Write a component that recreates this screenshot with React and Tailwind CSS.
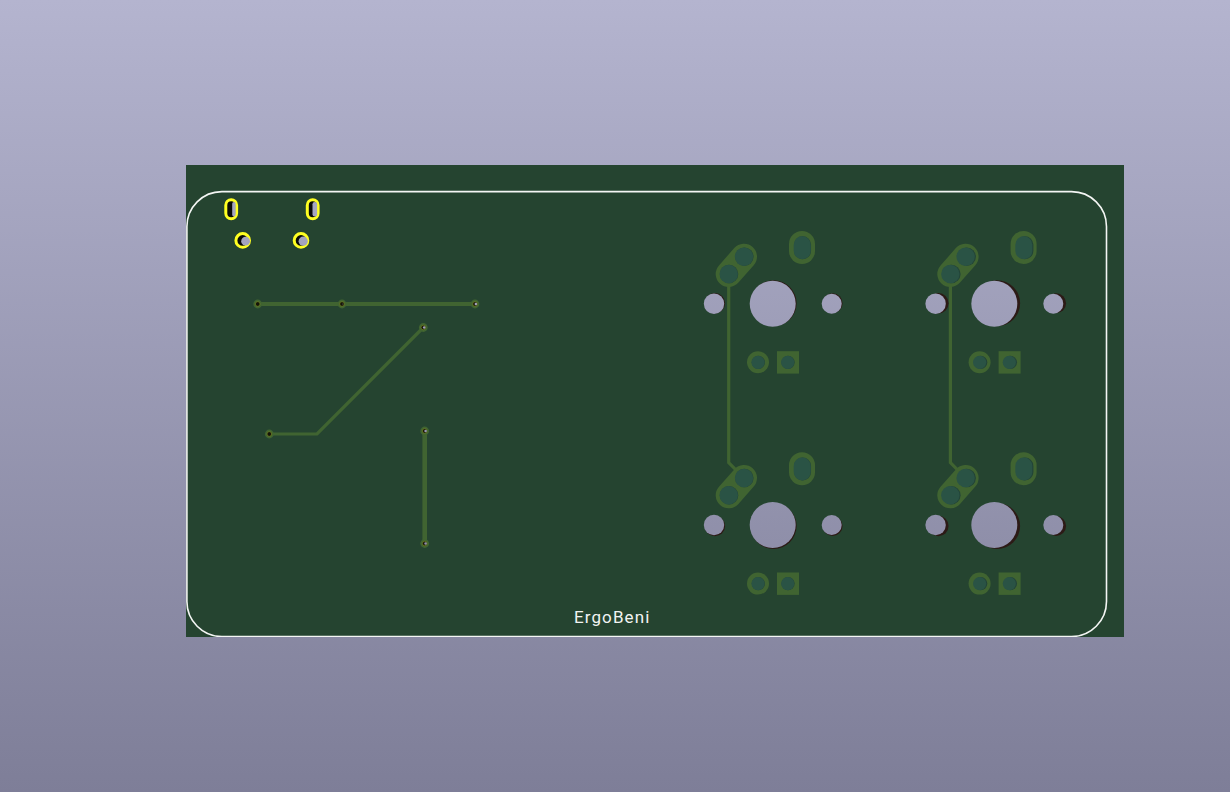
const SKY_TOP = '#b4b4cf';
const SKY_BOTTOM = '#7e7e98';
const PAD = '#406431';
const DRILL = '#2a5345';
const WALL = '#2c1a16';

// switch footprints, page coordinates of the centre hole
const switches = [
  { x: 772.7, y: 303.7, dx: 0.9, dy: -0.5 },
  { x: 772.7, y: 525, dx: 0.9, dy: 1 },
  { x: 994.3, y: 303.7, dx: 2.8, dy: -0.5 },
  { x: 994.3, y: 525, dx: 2.8, dy: 1 },
];

const vias = [
  { x: 257.7, y: 304, light: 0 },
  { x: 342, y: 304, light: 0.3 },
  { x: 475, y: 304, light: 0.9 },
  { x: 423.3, y: 327.5, light: 0.9 },
  { x: 269.3, y: 434, light: 0 },
  { x: 424.7, y: 431, light: 0.9 },
  { x: 424.7, y: 543.5, light: 0.9 },
];

const traces = [
  { d: 'M257.7 304H475', w: 4 },
  { d: 'M269.3 434H317L423.3 327.5', w: 3.2 },
  { d: 'M424.7 431V543.5', w: 4.6 },
  { d: 'M728.7 274V462.5L736 470', w: 3.2 },
  { d: 'M950.4 274V462.5L957.7 470', w: 3.2 },
];

const Hole = ({ x, y, r, dx, dy }) => (
  <g>
    <circle cx={x + dx} cy={y + dy} r={r} fill={WALL} />
    <circle cx={x} cy={y} r={r} fill="url(#sky)" />
  </g>
);

const Drill = ({ x, y, r, dx }) => (
  <g>
    <circle cx={x + dx * 0.4} cy={y} r={r} fill="#234438" />
    <circle cx={x} cy={y} r={r} fill={DRILL} />
  </g>
);

const SwitchFootprint = ({ x, y, dx, dy }) => (
  <g>
    {/* angled pad */}
    <line x1={x - 44} y1={y - 29.7} x2={x - 28.7} y2={y - 47} stroke={PAD} strokeWidth="26" strokeLinecap="round" />
    <Drill x={x - 44} y={y - 29.7} r={9.2} dx={dx} />
    <Drill x={x - 28.7} y={y - 47} r={9.2} dx={dx} />
    {/* slotted pad */}
    <rect x={x + 16.3} y={y - 72.7} width="26" height="33" rx="13" fill={PAD} />
    <rect x={x + 21 + dx * 0.4} y={y - 67.5} width="17" height="23" rx="8.5" fill="#234438" />
    <rect x={x + 21} y={y - 67.5} width="17" height="23" rx="8.5" fill={DRILL} />
    {/* mounting holes */}
    <Hole x={x} y={y} r={23} dx={dx} dy={dy} />
    <Hole x={x - 58.7} y={y} r={10.2} dx={dx} dy={dy} />
    <Hole x={x + 59} y={y} r={10} dx={dx} dy={dy} />
    {/* diode pads */}
    <circle cx={x - 14.7} cy={y + 58.6} r="11" fill={PAD} />
    <Drill x={x - 14.7} y={y + 58.6} r={6.6} dx={dx} />
    <rect x={x + 4.3} y={y + 47.5} width="22" height="22.4" fill={PAD} />
    <Drill x={x + 15} y={y + 58.6} r={6.6} dx={dx} />
  </g>
);

const Board = () => (
  <svg className="block w-full h-full" viewBox="186 165 938 472">
    <defs>
      <linearGradient id="sky" gradientUnits="userSpaceOnUse" x1="0" y1="0" x2="0" y2="792">
        <stop offset="0" stopColor={SKY_TOP} />
        <stop offset="1" stopColor={SKY_BOTTOM} />
      </linearGradient>
    </defs>

    {traces.map(t => (
      <path key={t.d} d={t.d} fill="none" stroke={PAD} strokeWidth={t.w} />
    ))}

    {switches.map(s => (
      <SwitchFootprint key={`${s.x}-${s.y}`} {...s} />
    ))}

    {/* connector slots */}
    <rect x="225.8" y="199.8" width="10.8" height="18.9" rx="5.4" fill="#0b0b08" stroke="#ffff22" strokeWidth="3" />
    <rect x="232.2" y="202" width="3.4" height="14.5" rx="1.7" fill="url(#sky)" />
    <rect x="307.3" y="199.8" width="10.8" height="18.9" rx="5.4" fill="#0b0b08" stroke="#ffff22" strokeWidth="3" />
    <rect x="312.5" y="202" width="4.6" height="14.5" rx="2.2" fill="url(#sky)" />

    {/* connector round holes */}
    <circle cx="242.7" cy="240.4" r="6.8" fill="#0b0b08" stroke="#ffff22" strokeWidth="3" />
    <circle cx="245.6" cy="241.2" r="4.4" fill="url(#sky)" />
    <circle cx="301" cy="240.4" r="6.8" fill="#0b0b08" stroke="#ffff22" strokeWidth="3" />
    <circle cx="303.2" cy="241.2" r="4.6" fill="url(#sky)" />

    {vias.map(v => (
      <g key={`${v.x}-${v.y}`}>
        <circle cx={v.x} cy={v.y} r="4.4" fill={PAD} />
        <circle cx={v.x} cy={v.y} r="2.3" fill="#14140a" stroke="#7f8a1e" strokeWidth="0.6" />
        {v.light > 0 && <circle cx={v.x + 0.9} cy={v.y} r={1.4 * v.light} fill="url(#sky)" />}
      </g>
    ))}

    {/* board outline */}
    <rect x="186.9" y="191.6" width="919.6" height="444.9" rx="35" fill="none" stroke="#f4f6f4" strokeWidth="1.6" />
  </svg>
);

export default function App() {
  return (
    <div className="w-full h-[792px] overflow-hidden pl-[186px] pt-[165px] bg-gradient-to-b from-[#b4b4cf] to-[#7e7e98]">
      <div className="relative w-[938px] h-[472px] bg-[#254430]">
        <Board />
        <span className="absolute left-[388px] top-[440px] text-[17px] leading-6 tracking-[1.1px] text-[#f2f4f2] font-['Roboto',sans-serif]">
          ErgoBeni
        </span>
      </div>
    </div>
  );
}
